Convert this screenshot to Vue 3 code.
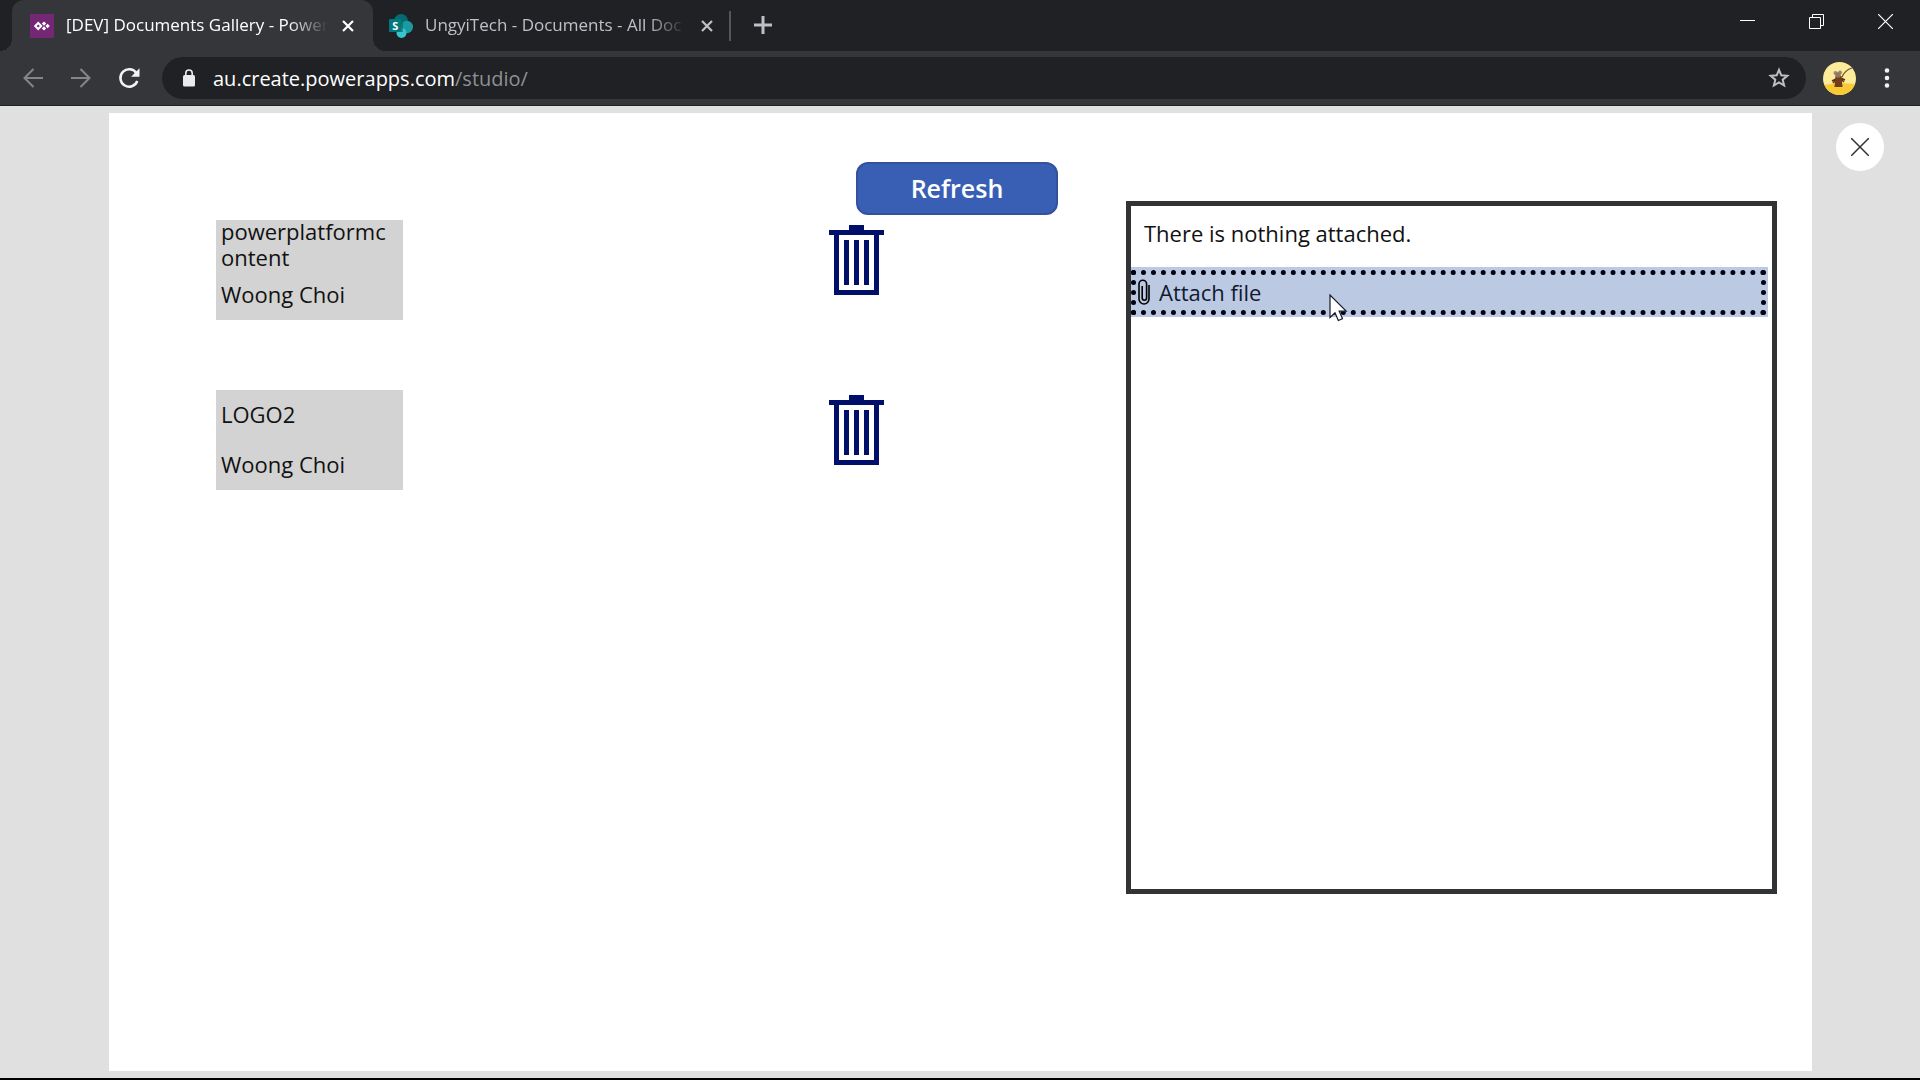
<script setup>
import { ref } from 'vue'

const documents = ref([
  { id: 1, name: 'powerplatformcontent', author: 'Woong Choi' },
  { id: 2, name: 'LOGO2', author: 'Woong Choi' },
])

function removeDocument(id) {
  documents.value = documents.value.filter((d) => d.id !== id)
}
</script>

<template>
  <div class="window">
    <header class="browser">
      <div class="tab-strip">
        <div class="tab active">
          <svg class="favicon" viewBox="0 0 24 24" aria-hidden="true">
            <rect width="24" height="24" fill="#742774" />
            <path d="M8.200 9 11.200 12l-3 3-3-3z" fill="none" stroke="#fff" stroke-width="2" />
            <path d="M14 7.400l2.200 2.200-2.200 2.200-2.200-2.200zM14 12.200l2.200 2.200-2.200 2.200-2.200-2.200zM17.600 9.800l2.200 2.200-2.200 2.200-2.200-2.200z" fill="#fff" />
          </svg>
          <span class="tab-title">[DEV] Documents Gallery - Power</span>
          <button class="tab-close" aria-label="Close tab">
            <svg width="12" height="12" viewBox="0 0 12 12"><path d="M1 1l10 10M11 1 1 11" stroke="currentColor" stroke-width="2.200" /></svg>
          </button>
        </div>
        <div class="tab">
          <svg class="favicon" viewBox="0 0 24 24" aria-hidden="true">
            <circle cx="12" cy="7" r="7" fill="#036c70" />
            <circle cx="17.800" cy="13" r="6.200" fill="#1a9ba1" />
            <circle cx="12.500" cy="19" r="5" fill="#37c6d0" />
            <path d="M8 6h6v12H8z" fill="#025a5d" opacity=".5" />
            <rect y="5" width="12.500" height="13" rx="1" fill="#03787c" />
            <text x="6.300" y="15.500" text-anchor="middle" font-size="11" font-weight="700" fill="#fff">S</text>
          </svg>
          <span class="tab-title">UngyiTech - Documents - All Doc</span>
          <button class="tab-close" aria-label="Close tab">
            <svg width="12" height="12" viewBox="0 0 12 12"><path d="M1 1l10 10M11 1 1 11" stroke="currentColor" stroke-width="2.200" /></svg>
          </button>
        </div>
        <button class="new-tab" aria-label="New tab">
          <svg width="18" height="18" viewBox="0 0 18 18"><path d="M9 0v18M0 9h18" stroke="currentColor" stroke-width="3" /></svg>
        </button>
        <div class="window-controls">
          <button aria-label="Minimize">
            <svg width="15" height="15" viewBox="0 0 15 15"><path d="M0 6.500h15" stroke="#fff" /></svg>
          </button>
          <button aria-label="Restore">
            <svg width="15" height="15" viewBox="0 0 15 15"><path d="M.5 3.500h11v11H.5zM3.500 3.500v-3h11v11h-3" fill="none" stroke="#fff" /></svg>
          </button>
          <button aria-label="Close window">
            <svg width="15" height="15" viewBox="0 0 15 15"><path d="M0 0l15 15M15 0 0 15" stroke="#fff" stroke-width="1.200" /></svg>
          </button>
        </div>
      </div>

      <div class="toolbar">
        <nav class="nav">
          <button aria-label="Back">
            <svg width="20" height="20" viewBox="0 0 20 20" fill="none" stroke="#85868a" stroke-width="2"><path d="M20 10H1.500M10.500 1l-9 9 9 9" /></svg>
          </button>
          <button aria-label="Forward">
            <svg width="20" height="20" viewBox="0 0 20 20" fill="none" stroke="#85868a" stroke-width="2"><path d="M0 10h18.500M9.500 1l9 9-9 9" /></svg>
          </button>
          <button aria-label="Reload">
            <svg width="22" height="22" viewBox="0 0 22 22"><path d="M18.600 6.500A8.700 8.700 0 1 0 19.300 14" fill="none" stroke="#f1f3f4" stroke-width="2.500" /><path d="M21.500 1.300v8.400h-8.400z" fill="#f1f3f4" /></svg>
          </button>
        </nav>
        <div class="omnibox">
          <svg width="12" height="18" viewBox="0 0 12 18" aria-hidden="true">
            <rect y="6" width="12" height="11.500" rx="1.500" fill="#e8eaed" />
            <path d="M2.800 7V4.200a3.200 3.200 0 0 1 6.400 0V7" fill="none" stroke="#e8eaed" stroke-width="1.600" />
          </svg>
          <a class="url" href="#">au.create.powerapps.com<span>/studio/</span></a>
          <button class="star" aria-label="Bookmark this tab">
            <svg width="22" height="22" viewBox="0 0 22 22"><path d="M11 2.800l2.300 5.500 6 .5-4.600 3.900 1.400 5.800-5.100-3.100-5.100 3.100 1.400-5.800-4.600-3.900 6-.5z" fill="none" stroke="#bdc1c6" stroke-width="2" /></svg>
          </button>
        </div>
        <button class="avatar" aria-label="Profile">
          <svg width="33" height="33" viewBox="0 0 33 33">
            <defs><clipPath id="disc"><circle cx="16.500" cy="16.500" r="16.500" /></clipPath></defs>
            <g clip-path="url(#disc)">
              <rect width="33" height="33" fill="#fdeb9c" />
              <path d="M0 23q16-3 33-1v11H0z" fill="#f8cb35" />
              <path d="M19 15q3-7 10-9" fill="none" stroke="#70552b" stroke-width="1.200" />
              <path d="M9 19l4-2 5-1 4 2M10 21l3-3M18 17l3 3" fill="none" stroke="#5b3215" stroke-width="1.500" />
              <path d="M12.500 14h6l1 11h-8z" fill="#743d17" />
              <circle cx="12.500" cy="11" r="2" fill="#a18670" />
              <circle cx="17" cy="10.500" r="2" fill="#a18670" />
              <circle cx="15" cy="13" r="2.800" fill="#927661" />
            </g>
          </svg>
        </button>
        <button class="menu" aria-label="Menu">
          <svg width="6" height="20" viewBox="0 0 6 20" fill="#f1f3f4"><circle cx="3" cy="2.500" r="2.300" /><circle cx="3" cy="10" r="2.300" /><circle cx="3" cy="17.500" r="2.300" /></svg>
        </button>
      </div>
    </header>

    <main class="stage">
      <section class="canvas">
        <div class="left">
          <button class="refresh">Refresh</button>
          <ul class="gallery">
            <li v-for="doc in documents" :key="doc.id" class="item">
              <div class="card">
                <div class="label">{{ doc.name }}</div>
                <div class="label">{{ doc.author }}</div>
              </div>
              <button class="trash" :aria-label="`Delete ${doc.name}`" @click="removeDocument(doc.id)">
                <svg width="55" height="70" viewBox="0 0 55 70" fill="#000f69" shape-rendering="crispEdges">
                  <path d="M20 0h15v5h20v5h-5v60H5V10H0V5h20zM10 10v55h35V10z" fill-rule="evenodd" />
                  <path d="M15 15h5v45h-5zM25 15h5v45h-5zM35 15h5v45h-5z" />
                </svg>
              </button>
            </li>
          </ul>
        </div>

        <div class="attachments">
          <p class="empty">There is nothing attached.</p>
          <button class="attach">
            <span class="dashed">
              <svg width="12" height="26" viewBox="0 0 12 26" fill="none" stroke="#000" stroke-width="1.600" aria-hidden="true">
                <path d="M11 6v14a5 5 0 0 1-10 0V5a3.800 3.800 0 0 1 7.600 0v14a2.200 2.200 0 0 1-4.400 0V7" />
              </svg>
              Attach file
            </span>
            <svg class="cursor" width="22" height="30" viewBox="0 0 22 30" aria-hidden="true">
              <path d="M1 1v22.500l5-4.800 3.300 7.800 4.200-1.800-3.300-7.500h7z" fill="#fff" stroke="#151a2b" stroke-width="1.200" />
            </svg>
          </button>
        </div>
      </section>

      <button class="close-preview" aria-label="Close preview">
        <svg width="18" height="18" viewBox="0 0 18 18"><path d="M0 0l18 18M18 0 0 18" stroke="#333" stroke-width="1.500" /></svg>
      </button>
    </main>
  </div>
</template>

<style>
body {
  margin: 0;
}
</style>

<style scoped>
* {
  box-sizing: border-box;
}

button {
  display: flex;
  align-items: center;
  justify-content: center;
  flex: none;
  margin: 0;
  padding: 0;
  border: 0;
  background: none;
  color: inherit;
  font: inherit;
  cursor: pointer;
}

svg {
  display: block;
  flex: none;
}

.window {
  display: flex;
  flex-direction: column;
  min-height: 100vh;
  border-bottom: 2px solid #000;
  background: #e0e0e0;
  font-family: "Open Sans", "Noto Sans", sans-serif;
}

/* Browser chrome */
.browser {
  color: #fff;
}

.tab-strip {
  display: flex;
  height: 51px;
  padding-left: 12px;
  background: #202124;
}

.tab {
  position: relative;
  display: flex;
  align-items: center;
  width: 358px;
  padding: 0 18px 0 16px;
  color: #bdc1c6;
}

.tab:not(.active)::after {
  content: "";
  position: absolute;
  right: 0;
  top: 11px;
  width: 2px;
  height: 30px;
  background: #54565a;
}

.tab.active {
  width: 361px;
  padding: 0 19px 0 18px;
  border-radius: 12px 12px 0 0;
  background: #35363a;
  color: #fff;
}

.tab.active::before,
.tab.active::after {
  content: "";
  position: absolute;
  bottom: 0;
  width: 12px;
  height: 12px;
}

.tab.active::before {
  right: 100%;
  background: radial-gradient(circle at 0 0, #202124 12px, #35363a 12px);
}

.tab.active::after {
  left: 100%;
  background: radial-gradient(circle at 100% 0, #202124 12px, #35363a 12px);
}

.favicon {
  width: 24px;
  height: 24px;
}

.tab-title {
  flex: 1;
  min-width: 0;
  margin: 0 14px 0 12px;
  padding-bottom: 2px;
  overflow: hidden;
  white-space: nowrap;
  font-size: 17px;
  line-height: 24px;
  mask-image: linear-gradient(to right, #000 calc(100% - 40px), transparent);
}

.tab-close {
  width: 12px;
  height: 24px;
}

.new-tab {
  width: 64px;
  height: 49px;
  color: #bdc1c6;
}

.window-controls {
  display: flex;
  margin-left: auto;
}

.window-controls button {
  width: 69px;
  height: 43px;
}

.toolbar {
  display: flex;
  align-items: center;
  height: 55px;
  padding: 0 15px 0 9px;
  border-bottom: 1px solid #202124;
  background: #35363a;
}

.nav {
  display: flex;
  margin-right: 9px;
}

.nav button {
  width: 48px;
  height: 40px;
}

.omnibox {
  display: flex;
  align-items: center;
  flex: 1;
  height: 42px;
  padding: 0 16px 0 21px;
  border-radius: 21px;
  background: #202124;
}

.url {
  margin: 0 auto 0 18px;
  padding-top: 2px;
  color: #fff;
  font-size: 20px;
  font-weight: 380;
  line-height: 26px;
  text-decoration: none;
}

.url span {
  color: #8d9196;
}

.avatar {
  margin-left: 17px;
}

.menu {
  width: 36px;
  height: 36px;
  margin-left: 13px;
}

/* App preview */
.stage {
  display: flex;
  flex: 1;
  align-items: stretch;
  padding: 7px 36px 7px 109px;
}

.canvas {
  display: grid;
  flex: 1;
  grid-template-columns: 1017fr 651fr;
  padding-right: 35px;
  background: #fff;
  color: #111;
  font-size: 22px;
  font-weight: 380;
  line-height: 26px;
}

.left {
  display: flex;
  flex-direction: column;
  padding: 49px 68px 0 107px;
}

.refresh {
  align-self: flex-end;
  width: 202px;
  height: 53px;
  padding-bottom: 2px;
  border: 2px solid #34529b;
  border-radius: 12px;
  background: #385fb3;
  color: #fff;
  font-size: 25px;
  font-weight: 600;
}

.gallery {
  display: flex;
  flex-direction: column;
  gap: 70px;
  margin: 5px 0 0;
  padding: 0 174px 0 0;
  list-style: none;
}

.item {
  display: flex;
  align-items: flex-start;
  justify-content: space-between;
}

.card {
  width: 187px;
  background: #d3d3d3;
}

.label {
  display: flex;
  align-items: center;
  height: 50px;
  padding: 0 12px 2px 5px;
  overflow-wrap: anywhere;
}

.trash {
  margin-top: 5px;
}

.attachments {
  margin: 88px 0 177px;
  border: 5px solid #323334;
}

.empty {
  margin: 0;
  padding: 14px 13px 21px;
}

.attach {
  position: relative;
  width: calc(100% - 4px);
  height: 50px;
  padding: 3px 2px 2px 0;
  background: #bbc9e3;
  color: #111a2e;
}

.dashed {
  display: flex;
  flex: 1;
  align-items: center;
  gap: 9px;
  height: 45px;
  padding: 0 2px 2px;
  border: 5px dotted #00020f;
}

.cursor {
  position: absolute;
  top: 27px;
  left: 198px;
}

.close-preview {
  width: 48px;
  height: 48px;
  margin: 10px 0 0 24px;
  border-radius: 50%;
  background: #fff;
}
</style>
